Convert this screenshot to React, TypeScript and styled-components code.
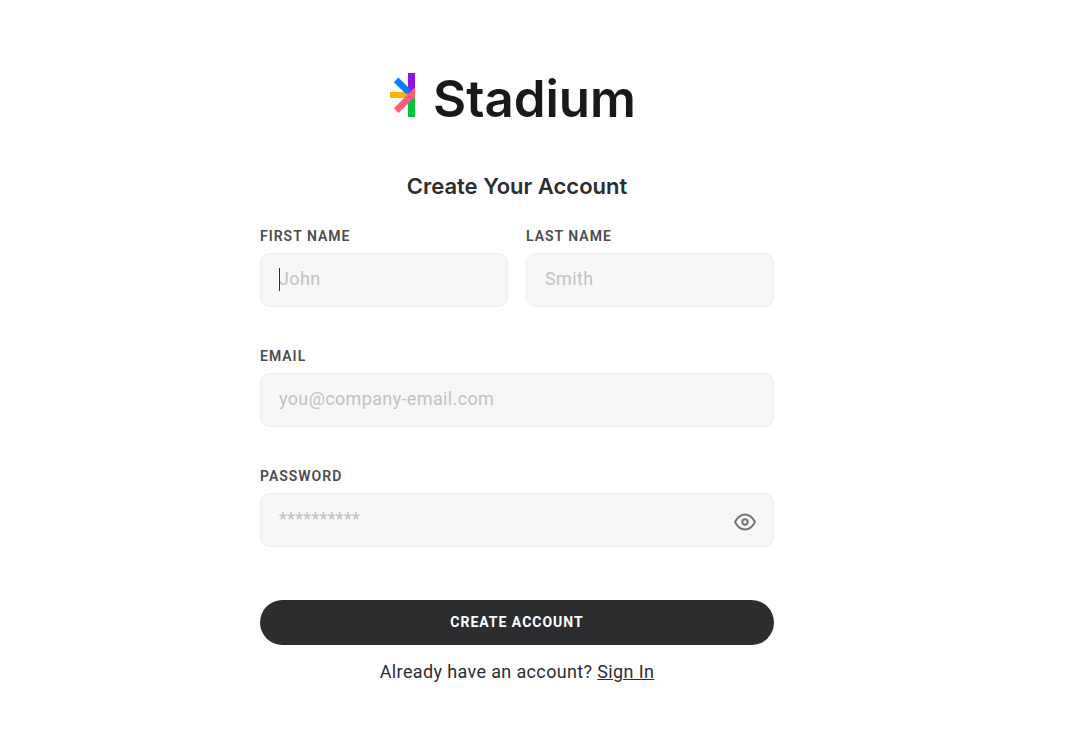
import React, { useState } from 'react';
import styled, { createGlobalStyle } from 'styled-components';

const GlobalStyle = createGlobalStyle`
  *, *::before, *::after {
    box-sizing: border-box;
  }

  body {
    margin: 0;
    background: #ffffff;
    color: #2c2d2e;
    font-family: Roboto, "Open Sans", sans-serif;
    font-size: 18px;
  }
`;

const Page = styled.main`
  display: flex;
  justify-content: center;
  padding: 67px 74px 40px 24px;
`;

const Panel = styled.div`
  display: flex;
  flex-direction: column;
  width: 100%;
  max-width: 514px;
`;

const Brand = styled.div`
  display: flex;
  align-items: baseline;
  justify-content: center;
  gap: 18px;
  padding-right: 8px;
`;

const BrandMark = styled.svg`
  display: block;
  width: 25px;
  height: 44px;
`;

const BrandName = styled.span`
  color: #18191a;
  font-family: Inter, sans-serif;
  font-size: 51px;
  font-weight: 600;
  line-height: 64px;
`;

const Title = styled.h1`
  margin: 39px 0 27px;
  font-family: Inter, sans-serif;
  font-size: 22px;
  font-weight: 600;
  line-height: 32px;
  text-align: center;
`;

const Form = styled.form`
  display: flex;
  flex-direction: column;
`;

const NameRow = styled.div`
  display: grid;
  grid-template-columns: 1fr 1fr;
  gap: 18px;
`;

const Field = styled.div`
  display: flex;
  flex-direction: column;
  gap: 10px;
  padding-bottom: 42px;
`;

const Label = styled.label`
  color: #4a4b4d;
  font-size: 14px;
  font-weight: 600;
  letter-spacing: 1px;
  line-height: 14px;
  text-transform: uppercase;
`;

const Control = styled.div<{ $caret?: boolean }>`
  position: relative;
  display: flex;

  &::before {
    content: "";
    display: ${({ $caret }) => ($caret ? 'block' : 'none')};
    position: absolute;
    top: 15px;
    left: 19px;
    width: 1px;
    height: 23px;
    background: #2c2d3a;
  }
`;

const Input = styled.input`
  width: 100%;
  height: 54px;
  padding: 0 18px 4px;
  border: 1px solid #eeeeee;
  border-radius: 10px;
  outline: none;
  background: #f7f7f7;
  color: #2c2d2e;
  caret-color: transparent;
  font-family: inherit;
  font-size: 18px;
  letter-spacing: 0.02em;

  &::placeholder {
    color: #c1c1c1;
    opacity: 1;
  }
`;

const RevealButton = styled.button`
  position: absolute;
  top: 17px;
  right: 17px;
  display: flex;
  padding: 0;
  border: 0;
  background: none;
  color: #757575;
  cursor: pointer;
`;

const SubmitButton = styled.button`
  height: 45px;
  margin-top: 11px;
  padding: 0 24px 2px;
  border: 0;
  border-radius: 23px;
  background: #2c2d2e;
  color: #ffffff;
  font-family: inherit;
  font-size: 14px;
  font-weight: 700;
  letter-spacing: 1px;
  text-transform: uppercase;
  cursor: pointer;
`;

const SignIn = styled.p`
  margin: 15px 0 0;
  letter-spacing: 0.02em;
  line-height: 24px;
  text-align: center;
`;

const SignInLink = styled.a`
  color: inherit;
  text-decoration: underline;
`;

function Logo() {
  return (
    <Brand>
      <BrandMark viewBox="0 0 25 44" aria-hidden="true">
        <rect x="18" y="0" width="7" height="22" fill="#8c14e6" />
        <rect x="18" y="20" width="7" height="24" fill="#00c23c" />
        <rect x="0" y="19" width="18" height="6" fill="#ffb300" />
        <path d="M8.3 4.5 L21 17 L16.5 21.5 L3.9 9.2 Z" fill="#0f7bff" />
        <path d="M25 14 V23.5 L8.5 40 L3.9 35.2 Z" fill="#ff5c78" />
      </BrandMark>
      <BrandName>Stadium</BrandName>
    </Brand>
  );
}

interface TextFieldProps {
  id: string;
  label: string;
  placeholder: string;
  type?: string;
  caret?: boolean;
  children?: React.ReactNode;
}

function TextField({ id, label, placeholder, type = 'text', caret, children }: TextFieldProps) {
  return (
    <Field>
      <Label htmlFor={id}>{label}</Label>
      <Control $caret={caret}>
        <Input id={id} name={id} type={type} placeholder={placeholder} />
        {children}
      </Control>
    </Field>
  );
}

export default function App() {
  const [visible, setVisible] = useState(false);

  return (
    <>
      <GlobalStyle />
      <Page>
        <Panel>
          <Logo />
          <Title>Create Your Account</Title>
          <Form onSubmit={(event) => event.preventDefault()}>
            <NameRow>
              <TextField id="firstName" label="First name" placeholder="John" caret />
              <TextField id="lastName" label="Last name" placeholder="Smith" />
            </NameRow>
            <TextField id="email" label="Email" type="email" placeholder="you@company-email.com" />
            <TextField
              id="password"
              label="Password"
              type={visible ? 'text' : 'password'}
              placeholder="**********"
            >
              <RevealButton
                type="button"
                aria-label="Show password"
                aria-pressed={visible}
                onClick={() => setVisible(!visible)}
              >
                <svg width="24" height="24" viewBox="0 0 24 24" fill="none" stroke="currentColor" strokeWidth="2">
                  <path d="M2 12 C4.5 7.3 8 4.5 12 4.5 S19.5 7.3 22 12 C19.5 16.7 16 19.5 12 19.5 S4.5 16.7 2 12 Z" strokeLinejoin="round" />
                  <circle cx="12" cy="12" r="2.7" />
                </svg>
              </RevealButton>
            </TextField>
            <SubmitButton type="submit">Create account</SubmitButton>
          </Form>
          <SignIn>
            Already have an account? <SignInLink href="#sign-in">Sign In</SignInLink>
          </SignIn>
        </Panel>
      </Page>
    </>
  );
}
